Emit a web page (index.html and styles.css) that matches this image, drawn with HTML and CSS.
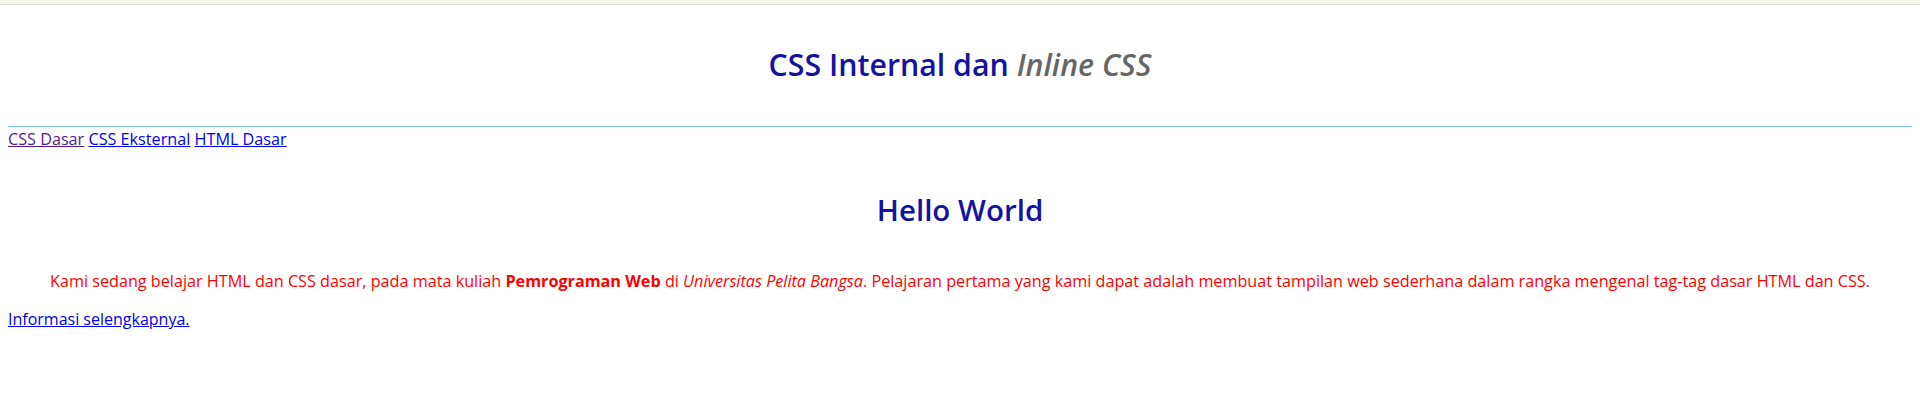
FILE: index.html
```html
<!DOCTYPE html>
<html lang="id">
<head>
<meta charset="utf-8">
<title>CSS Internal dan Inline CSS</title>
<link rel="stylesheet" href="styles.css">
</head>
<body>
<div class="topbar"></div>
<div class="page">
  <header class="header">
    <h1 class="title">CSS Internal dan <em class="title-em">Inline CSS</em></h1>
  </header>
  <nav class="nav">
    <a class="nav-link visited" href="#">CSS Dasar</a>
    <a class="nav-link" href="#">CSS Eksternal</a>
    <a class="nav-link" href="#">HTML Dasar</a>
  </nav>
  <h2 class="hello">Hello World</h2>
  <p class="intro"><span class="med">Kami sedang belajar</span> HTML dan CSS <span class="med">dasar, pada mata kuliah</span> <strong class="strong">Pemrograman Web</strong> <span class="med">di</span> <em class="em">Universitas Pelita Bangsa</em><span class="med">. Pelajaran pertama yang kami dapat adalah membuat tampilan web sederhana dalam rangka mengenal tag-tag dasar</span> HTML dan CSS<span class="med">.</span></p>
  <p class="more"><a class="more-link" href="#">Informasi selengkapnya.</a></p>
</div>
</body>
</html>
```
FILE: styles.css
```css
html, body {
  margin: 0;
  padding: 0;
  background: #ffffff;
}
body {
  font-family: "Open Sans", "Liberation Sans", sans-serif;
  font-size: 16px;
}
.topbar {
  height: 4px;
  background: #f7f9f0;
  border-bottom: 1px solid #dcded2;
}
.page {
  padding: 0 8px;
}
.header {
  border-bottom: 1px solid #7fcbef;
  padding: 39px 0 41px;
}
.title {
  margin: 0;
  font-size: 30.3px;
  line-height: 41px;
  font-weight: 600;
  color: #13139f;
  text-align: center;
}
.title-em {
  font-style: italic;
  font-weight: 600;
  color: #666666;
}
.nav {
  padding-top: 1px;
  line-height: 22px;
  font-size: 16.2px;
}
.nav-link {
  color: #0000ee;
}
.nav-link.visited {
  color: #551a8b;
}
.hello {
  margin: 40px 0 0;
  font-size: 29.5px;
  line-height: 39px;
  font-weight: 600;
  color: #13139f;
  text-align: center;
}
.intro {
  margin: 41px 0 0;
  line-height: 22px;
  font-size: 16.2px;
  color: #ff0000;
  text-align: center;
}
.med {
  font-weight: 500;
}
.strong {
  font-weight: 700;
}
.em {
  font-style: italic;
}
.more {
  margin: 16px 0 0;
  line-height: 22px;
}
.more-link {
  color: #0000ee;
}
```
